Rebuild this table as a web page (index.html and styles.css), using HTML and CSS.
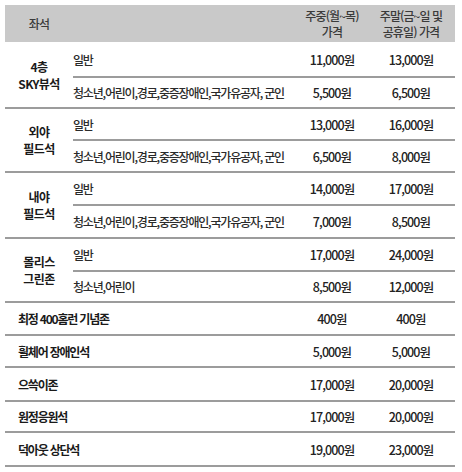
FILE: index.html
```html
<!DOCTYPE html>
<html lang="ko">
<head>
<meta charset="utf-8">
<link rel="stylesheet" href="styles.css">
</head>
<body>
<div class="price-table">
  <div class="cell head seat">좌석</div>
  <div class="cell head"></div>
  <div class="cell head price">주중(월~목)<br>가격</div>
  <div class="cell head price">주말(금~일 및<br>공휴일) 가격</div>

  <div class="cell group line">4층<br>SKY뷰석</div>
  <div class="cell sub subline">일반</div>
  <div class="cell price subline">11,000원</div>
  <div class="cell price subline">13,000원</div>
  <div class="cell sub line">청소년,어린이,경로,중증장애인,국가유공자, 군인</div>
  <div class="cell price line">5,500원</div>
  <div class="cell price line">6,500원</div>

  <div class="cell group line">외야<br>필드석</div>
  <div class="cell sub subline">일반</div>
  <div class="cell price subline">13,000원</div>
  <div class="cell price subline">16,000원</div>
  <div class="cell sub line">청소년,어린이,경로,중증장애인,국가유공자, 군인</div>
  <div class="cell price line">6,500원</div>
  <div class="cell price line">8,000원</div>

  <div class="cell group line">내야<br>필드석</div>
  <div class="cell sub subline">일반</div>
  <div class="cell price subline">14,000원</div>
  <div class="cell price subline">17,000원</div>
  <div class="cell sub line">청소년,어린이,경로,중증장애인,국가유공자, 군인</div>
  <div class="cell price line">7,000원</div>
  <div class="cell price line">8,500원</div>

  <div class="cell group line">몰리스<br>그린존</div>
  <div class="cell sub subline">일반</div>
  <div class="cell price subline">17,000원</div>
  <div class="cell price subline">24,000원</div>
  <div class="cell sub line">청소년,어린이</div>
  <div class="cell price line">8,500원</div>
  <div class="cell price line">12,000원</div>

  <div class="cell single line">최정 400홈런 기념존</div>
  <div class="cell price line">400원</div>
  <div class="cell price line">400원</div>

  <div class="cell single line">휠체어 장애인석</div>
  <div class="cell price line">5,000원</div>
  <div class="cell price line">5,000원</div>

  <div class="cell single line">으쓱이존</div>
  <div class="cell price line">17,000원</div>
  <div class="cell price line">20,000원</div>

  <div class="cell single line">원정응원석</div>
  <div class="cell price line">17,000원</div>
  <div class="cell price line">20,000원</div>

  <div class="cell single line">덕아웃 상단석</div>
  <div class="cell price line">19,000원</div>
  <div class="cell price line">23,000원</div>
</div>
</body>
</html>
```
FILE: styles.css
```css
html, body {
  margin: 0;
  padding: 0;
  background: #ffffff;
}

body {
  padding: 5px;
  font-family: "Noto Sans CJK KR", "Noto Sans", sans-serif;
  color: #222222;
}

.price-table {
  width: 450px;
  display: grid;
  grid-template-columns: 68px 224px 70px 88px;
  grid-template-rows: 37px 36px 31px 32px 32px 33px 33px 33px 31px 33px 32px 34px 31px 34px;
}

.cell {
  box-sizing: border-box;
  display: flex;
  align-items: center;
  font-size: 12.5px;
  font-weight: 500;
  letter-spacing: -0.9px;
  line-height: 15px;
  white-space: nowrap;
}

.head {
  background: #c9c9c9;
  color: #3a3a3a;
  font-size: 12px;
  line-height: 16px;
}

.seat {
  justify-content: center;
}

.price {
  justify-content: center;
  text-align: center;
}

.group {
  grid-row: span 2;
  justify-content: center;
  text-align: center;
  font-weight: 700;
  font-size: 12px;
  line-height: 17px;
  letter-spacing: -0.6px;
  color: #1a1a1a;
}

.sub {
  font-size: 12px;
  letter-spacing: -1.2px;
  color: #2a2a2a;
}

.single {
  grid-column: span 2;
  padding-left: 13px;
  font-weight: 700;
  font-size: 12px;
  letter-spacing: -1.2px;
  color: #1a1a1a;
}

.line {
  border-bottom: 2px solid #9c9c9c;
}

.subline {
  border-bottom: 2px solid #9c9c9c;
}
```
